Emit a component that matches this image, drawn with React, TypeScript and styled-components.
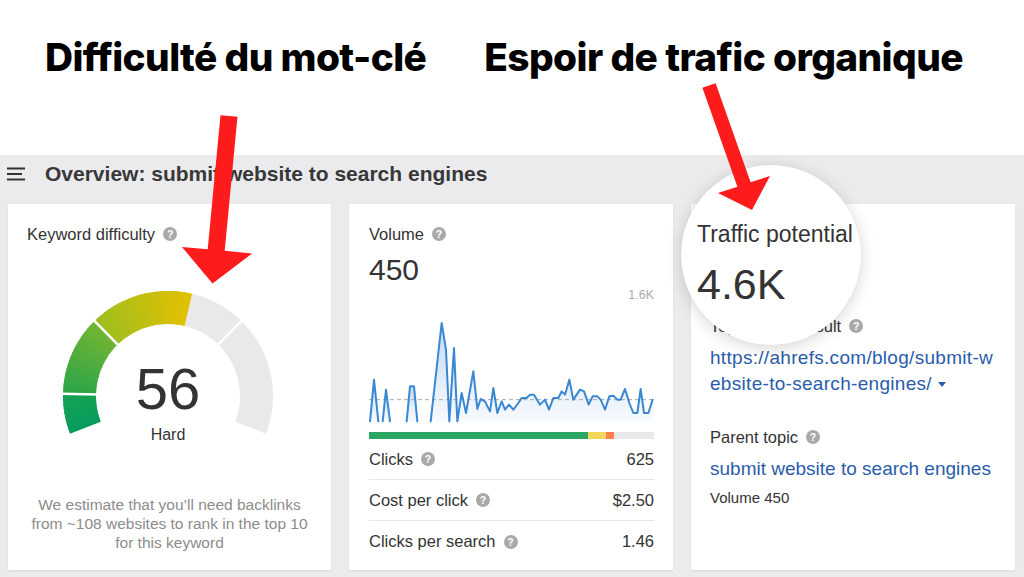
import React from "react";
import styled, { createGlobalStyle } from "styled-components";

const GlobalStyle = createGlobalStyle`
  html, body { margin: 0; padding: 0; background: #fff; }
  body { font-family: "Liberation Sans", Arial, sans-serif; color: #333; }
  * { box-sizing: border-box; }
`;

const Page = styled.div`
  position: relative;
  width: 1024px;
  height: 577px;
  overflow: hidden;
  background: #fff;
  display: flex;
  flex-direction: column;
`;

const Headlines = styled.header`
  height: 155px;
  flex: none;
  display: flex;
  align-items: flex-start;
  gap: 58px;
  padding: 34px 0 0 45px;
`;

const Headline = styled.h1`
  margin: 0;
  font-family: Inter, "Noto Sans", sans-serif;
  font-weight: 800;
  font-size: 38.8px;
  line-height: 46px;
  letter-spacing: -0.6px;
  color: #000;
  white-space: nowrap;
`;

const Dashboard = styled.main`
  flex: 1;
  background: #ebebee;
  display: flex;
  flex-direction: column;
`;

const DashHeader = styled.div`
  display: flex;
  align-items: center;
  gap: 20px;
  height: 49px;
  padding: 8px 0 19px 7px;
`;

const DashTitle = styled.h2`
  margin: 0;
  font-size: 21px;
  line-height: 22px;
  font-weight: 700;
  color: #383838;
`;

const CardGrid = styled.div`
  display: grid;
  grid-template-columns: 323px 324px 324px;
  column-gap: 18px;
  padding: 0 9px 0 8px;
  height: 366px;
`;

const Card = styled.section<{ $pad: string }>`
  position: relative;
  background: #fff;
  box-shadow: 0 1px 2px rgba(0, 0, 0, 0.07);
  display: flex;
  flex-direction: column;
  padding: ${(p) => p.$pad};
`;

const Label = styled.div<{ $top?: number }>`
  display: flex;
  align-items: center;
  gap: 8px;
  margin-top: ${(p) => p.$top ?? 0}px;
  font-size: 16.5px;
  line-height: 20px;
  color: #333;
  white-space: nowrap;
`;

const Help = styled.span`
  flex: none;
  width: 14px;
  height: 14px;
  border-radius: 50%;
  background: #a9a9a9;
  color: #fff;
  font: 700 10.5px/14px "Liberation Sans", Arial, sans-serif;
  text-align: center;
`;

const BigValue = styled.div`
  margin-top: 9px;
  font-size: 30px;
  line-height: 34px;
  color: #333;
`;

/* keyword difficulty gauge */
const Gauge = styled.div`
  position: relative;
  width: 220px;
  height: 155px;
  margin: 44px 0 0 31px;
`;

const GaugeScore = styled.div`
  position: absolute;
  top: 72px;
  left: 0;
  right: 0;
  text-align: center;
  font-size: 58px;
  line-height: 58px;
  color: #333;
`;

const GaugeRating = styled.div`
  position: absolute;
  top: 137px;
  left: 0;
  right: 0;
  text-align: center;
  font-size: 16px;
  line-height: 20px;
  color: #333;
`;

const Note = styled.p`
  margin: auto 0 0;
  text-align: center;
  font-size: 15.5px;
  line-height: 19px;
  color: #8c8c8c;
`;

/* volume card */
const ChartMax = styled.div`
  margin-top: 1px;
  text-align: right;
  font-size: 12.5px;
  line-height: 14px;
  color: #acacac;
`;

const Chart = styled.svg`
  display: block;
  margin-top: 11px;
`;

const StackBar = styled.div`
  display: flex;
  height: 7px;
  margin-top: 9px;
  background: #e9e9eb;
`;

const BarPart = styled.div<{ $color: string; $dotted?: boolean }>`
  height: 100%;
  background: ${(p) => p.$color};
  ${(p) =>
    p.$dotted &&
    `background-image: radial-gradient(circle, #ff9a5a 0.6px, transparent 1px);
     background-size: 2px 2px;`}
`;

const StatRow = styled.div`
  display: flex;
  align-items: center;
  justify-content: space-between;
  height: 41px;
  border-bottom: 1px solid #e6e6e8;
  font-size: 16.5px;
  color: #333;
  &:last-child {
    border-bottom: none;
  }
`;

const StatName = styled.span`
  display: flex;
  align-items: center;
  gap: 8px;
`;

/* traffic potential card */
const Lens = styled.div`
  position: relative;
  z-index: 2;
  flex: none;
  width: 180px;
  height: 180px;
  margin: -59px 0 -29px -29px;
  border-radius: 50%;
  background: #fff;
  box-shadow: 0 3px 16px rgba(0, 0, 0, 0.16), 0 0 2px rgba(0, 0, 0, 0.06);
  display: flex;
  flex-direction: column;
  gap: 12px;
  padding: 55px 0 0 16px;
`;

const LensLabel = styled.div`
  font-size: 23px;
  line-height: 28px;
  color: #333;
  white-space: nowrap;
`;

const LensValue = styled.div`
  font-size: 43px;
  line-height: 48px;
  color: #333;
`;

const UrlLink = styled.a`
  display: block;
  max-width: 288px;
  margin-top: 9px;
  font-size: 19px;
  line-height: 26px;
  letter-spacing: 0.3px;
  color: #2a5cab;
  text-decoration: none;
  word-break: break-all;
`;

const Caret = styled.span`
  display: inline-block;
  margin-left: 6px;
  border-left: 4px solid transparent;
  border-right: 4px solid transparent;
  border-top: 5px solid #2a5cab;
  vertical-align: middle;
`;

const TopicLink = styled.a`
  display: block;
  margin-top: 9px;
  font-size: 19px;
  line-height: 26px;
  color: #2a5cab;
  text-decoration: none;
  white-space: nowrap;
`;

const SubNote = styled.div`
  margin-top: 7px;
  font-size: 15px;
  line-height: 18px;
  color: #333;
`;

const Callouts = styled.svg`
  position: absolute;
  left: 0;
  top: 0;
  z-index: 5;
  pointer-events: none;
`;

/* gauge geometry */
const CX = 110;
const CY = 108;
const R_OUT = 105;
const R_IN = 72;
const rad = (v: number) => ((201 - 2.22 * v) * Math.PI) / 180;
const pt = (r: number, v: number) => [CX + r * Math.cos(rad(v)), CY - r * Math.sin(rad(v))];

function sector(v0: number, v1: number) {
  const [x0, y0] = pt(R_OUT, v0);
  const [x1, y1] = pt(R_OUT, v1);
  const [x2, y2] = pt(R_IN, v1);
  const [x3, y3] = pt(R_IN, v0);
  const large = (v1 - v0) * 2.22 > 180 ? 1 : 0;
  return `M${x0} ${y0} A${R_OUT} ${R_OUT} 0 ${large} 1 ${x1} ${y1} L${x2} ${y2} A${R_IN} ${R_IN} 0 ${large} 0 ${x3} ${y3} Z`;
}

const hex = (c: string) => [1, 3, 5].map((i) => parseInt(c.slice(i, i + 2), 16));
function mix(a: string, b: string, t: number) {
  const ca = hex(a);
  const cb = hex(b);
  return `rgb(${ca.map((v, i) => Math.round(v + (cb[i] - v) * t)).join(",")})`;
}

const bands = [
  { from: 0, to: 10, c0: "#079c5e", c1: "#17a253" },
  { from: 10, to: 30, c0: "#2ea548", c1: "#74b632" },
  { from: 30, to: 56, c0: "#a0be1e", c1: "#e4c000" },
];

const slices = bands.flatMap((b) => {
  const out: { d: string; fill: string }[] = [];
  for (let v = b.from; v < b.to; v += 1) {
    const end = Math.min(v + 1.6, b.to);
    out.push({ d: sector(v, end), fill: mix(b.c0, b.c1, (v - b.from) / (b.to - b.from)) });
  }
  return out;
});

function DifficultyGauge() {
  return (
    <svg width="220" height="155" viewBox="0 0 220 155">
      <path d={sector(56, 100)} fill="#e9e9eb" />
      {slices.map((s, i) => (
        <path key={i} d={s.d} fill={s.fill} />
      ))}
      {[10, 30, 70].map((v) => {
        const [x0, y0] = pt(R_IN - 2, v);
        const [x1, y1] = pt(R_OUT + 2, v);
        return <line key={v} x1={x0} y1={y0} x2={x1} y2={y1} stroke="#fff" strokeWidth="2.5" />;
      })}
    </svg>
  );
}

/* search volume history, in a 3x unit grid; baseline is y=395 */
const volumeRuns: number[][][] = [
  [[30, 395], [42, 270], [55, 395]],
  [[68, 395], [78, 300], [90, 395]],
  [[140, 395], [150, 290], [162, 290], [172, 395]],
  [
    [212, 395], [245, 100], [258, 180], [268, 395], [282, 175], [292, 395], [305, 310], [318, 370],
    [340, 245], [352, 358], [362, 328], [375, 335], [390, 365], [400, 295], [412, 370], [425, 335],
    [435, 360], [447, 345], [460, 360], [475, 340], [485, 325], [500, 325], [510, 315], [522, 315],
    [540, 345], [555, 330], [567, 360], [580, 325], [595, 325], [605, 305], [615, 315], [628, 270],
    [640, 330], [660, 300], [672, 305], [686, 345], [698, 320], [712, 320], [722, 330], [735, 360],
    [748, 320], [760, 318], [772, 330], [782, 330], [795, 298], [808, 340], [820, 370], [832, 370],
    [842, 298], [852, 370], [865, 370], [878, 330],
  ],
];

function VolumeChart() {
  return (
    <Chart width="285" height="110" viewBox="27 70 855 330">
      <defs>
        <linearGradient id="volumeFill" x1="0" y1="0" x2="0" y2="1">
          <stop offset="0" stopColor="#3a87d3" stopOpacity="0.3" />
          <stop offset="1" stopColor="#3a87d3" stopOpacity="0.04" />
        </linearGradient>
      </defs>
      {volumeRuns.map((run, i) => {
        const pts = run.map((p) => p.join(",")).join(" ");
        const first = run[0][0];
        const last = run[run.length - 1][0];
        return <polygon key={i} points={`${pts} ${last},395 ${first},395`} fill="url(#volumeFill)" />;
      })}
      <line x1="27" y1="330" x2="882" y2="330" stroke="#a9a9a9" strokeWidth="3" strokeDasharray="12 9" />
      {volumeRuns.map((run, i) => (
        <polyline
          key={i}
          points={run.map((p) => p.join(",")).join(" ")}
          fill="none"
          stroke="#3a87d3"
          strokeWidth="6"
          strokeLinejoin="round"
          strokeLinecap="round"
        />
      ))}
    </Chart>
  );
}

function MenuIcon() {
  return (
    <svg width="18" height="14" viewBox="0 0 18 14">
      <g stroke="#333" strokeWidth="2">
        <line x1="0" y1="1.5" x2="18" y2="1.5" />
        <line x1="0" y1="7" x2="15" y2="7" />
        <line x1="0" y1="12.5" x2="18" y2="12.5" />
      </g>
    </svg>
  );
}

const stats = [
  { name: "Clicks", value: "625" },
  { name: "Cost per click", value: "$2.50" },
  { name: "Clicks per search", value: "1.46" },
];

export default function App() {
  return (
    <>
      <GlobalStyle />
      <Page>
        <Headlines>
          <Headline>Difficulté du mot-clé</Headline>
          <Headline>Espoir de trafic organique</Headline>
        </Headlines>

        <Dashboard>
          <DashHeader>
            <MenuIcon />
            <DashTitle>Overview: submit website to search engines</DashTitle>
          </DashHeader>

          <CardGrid>
            <Card $pad="20px 19px 18px">
              <Label>
                Keyword difficulty <Help>?</Help>
              </Label>
              <Gauge>
                <DifficultyGauge />
                <GaugeScore>56</GaugeScore>
                <GaugeRating>Hard</GaugeRating>
              </Gauge>
              <Note>We estimate that you’ll need backlinks from ~108 websites to rank in the top 10 for this keyword</Note>
            </Card>

            <Card $pad="20px 19px 8px 20px">
              <Label>
                Volume <Help>?</Help>
              </Label>
              <BigValue>450</BigValue>
              <ChartMax>1.6K</ChartMax>
              <VolumeChart />
              <StackBar>
                <BarPart $color="#2ba562" style={{ width: "76.8%" }} />
                <BarPart $color="#f5d65c" style={{ width: "6.3%" }} />
                <BarPart $color="#ff3333" $dotted style={{ width: "2.8%" }} />
              </StackBar>
              <div>
                {stats.map((s) => (
                  <StatRow key={s.name}>
                    <StatName>
                      {s.name} <Help>?</Help>
                    </StatName>
                    <span>{s.value}</span>
                  </StatRow>
                ))}
              </div>
            </Card>

            <Card $pad="20px 19px 18px">
              <Lens>
                <LensLabel>Traffic potential</LensLabel>
                <LensValue>4.6K</LensValue>
              </Lens>
              <Label>
                Top-ranking result <Help>?</Help>
              </Label>
              <UrlLink href="#">
                https://ahrefs.com/blog/submit-website-to-search-engines/
                <Caret />
              </UrlLink>
              <Label $top={30}>
                Parent topic <Help>?</Help>
              </Label>
              <TopicLink href="#">submit website to search engines</TopicLink>
              <SubNote>Volume 450</SubNote>
            </Card>
          </CardGrid>
        </Dashboard>

        <Callouts width="1024" height="577" viewBox="0 0 1024 577">
          <polygon
            points="220.5,115.2 237.5,116.8 224.7,250.8 252,253.6 212.5,283.5 182,247 207.7,249.2"
            fill="#fe1b1b"
          />
          <polygon
            points="702.4,87.8 715.6,83.2 750.6,182.2 770,176 752,210 718,193 737.4,186.8"
            fill="#fe1b1b"
          />
        </Callouts>
      </Page>
    </>
  );
}
